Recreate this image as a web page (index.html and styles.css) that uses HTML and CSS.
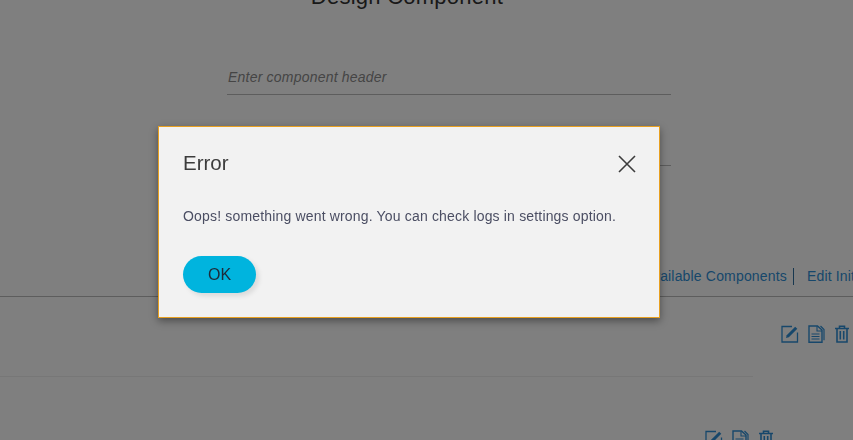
FILE: index.html
```html
<!DOCTYPE html>
<html lang="en">
<head>
<meta charset="utf-8">
<title>Design Component</title>
<link rel="stylesheet" href="styles.css">
</head>
<body>
<main class="page">
  <h1 class="title">Design Component</h1>
  <div class="form">
    <div class="field"><span class="placeholder">Enter component header</span></div>
    <div class="field field-empty"></div>
  </div>
  <nav class="links">
    <a class="link link-first">Available Components</a>
    <a class="link">Edit Initial Data</a>
  </nav>
  <section class="row row-first">
    <div class="actions">
      <svg class="icon" viewBox="0 0 18 18"><use href="#i-edit"/></svg>
      <svg class="icon" viewBox="0 0 18 18"><use href="#i-copy"/></svg>
      <svg class="icon" viewBox="0 0 18 18"><use href="#i-trash"/></svg>
    </div>
  </section>
  <section class="row row-second">
    <div class="actions">
      <svg class="icon" viewBox="0 0 18 18"><use href="#i-edit"/></svg>
      <svg class="icon" viewBox="0 0 18 18"><use href="#i-copy"/></svg>
      <svg class="icon" viewBox="0 0 18 18"><use href="#i-trash"/></svg>
    </div>
  </section>
</main>

<svg class="defs" aria-hidden="true">
  <symbol id="i-edit" viewBox="0 0 18 18">
    <path d="M11 1.500H1v15.500h15.500V7.500" fill="none" stroke="currentColor" stroke-width="1.300"/>
    <path d="M5 13l.7-2.800L14.200 1.700l2.100 2.100-8.500 8.500z" fill="currentColor"/>
  </symbol>
  <symbol id="i-copy" viewBox="0 0 18 18">
    <path d="M13.500 1L17 4.500v10.800" fill="none" stroke="currentColor" stroke-width="1.200"/>
    <path d="M2 1h8.500L15 5v12.300H2z" fill="none" stroke="currentColor" stroke-width="1.400"/>
    <path d="M10 1.200v4.800h5M4.500 9h8M4.500 11.500h8M4.500 14h8" fill="none" stroke="currentColor" stroke-width="1.100"/>
  </symbol>
  <symbol id="i-trash" viewBox="0 0 18 18">
    <path d="M2 3.500h14M6.500 3.500V1.200h5v2.300M4 3.500V17h10V3.500M7.300 6v8.500M10.700 6v8.500" fill="none" stroke="currentColor" stroke-width="1.600"/>
  </symbol>
</svg>

<div class="overlay"></div>

<div class="dialog" role="dialog" aria-labelledby="dialog-title">
  <header class="dialog-head">
    <h2 class="dialog-title" id="dialog-title">Error</h2>
    <svg class="close" viewBox="0 0 18 18" aria-label="Close"><path d="M1 1l16 16M17 1L1 17" fill="none" stroke="currentColor" stroke-width="1.600"/></svg>
  </header>
  <p class="dialog-text">Oops! something went wrong. You can check logs in settings option.</p>
  <button class="ok" type="button">OK</button>
</div>
</body>
</html>
```

FILE: styles.css
```css
* { box-sizing: border-box; }

html, body {
  margin: 0;
  height: 440px;
  overflow: hidden;
  background: #fff;
  font-family: "Liberation Sans", Arial, sans-serif;
}

.page {
  display: flex;
  flex-direction: column;
  height: 440px;
  overflow: hidden;
}

.page > * { flex: none; }

.title {
  margin: -19px 0 0;
  height: 30px;
  padding-right: 39px;
  font-size: 22px;
  line-height: 31px;
  font-weight: 400;
  letter-spacing: .25px;
  text-align: center;
  color: #333;
}

.form {
  display: flex;
  flex-direction: column;
  align-self: flex-start;
  width: 444px;
  margin: 53px 0 0 227px;
}

.field {
  height: 31px;
  padding-left: 1px;
  border-bottom: 1px solid #bbb;
  font-size: 14px;
  line-height: 26px;
}

.field-empty { height: 71px; }

.placeholder {
  font-style: italic;
  letter-spacing: .21px;
  color: #8a8a8a;
}

.links {
  display: flex;
  justify-content: flex-end;
  height: 34px;
  margin-top: 96px;
  margin-right: -64px;
  font-size: 14px;
  line-height: 28px;
  letter-spacing: .17px;
  color: #2f8fd6;
}

.link { padding: 0 13px; white-space: nowrap; }

.link-first {
  height: 17px;
  line-height: 17px;
  margin-top: 6px;
  padding-right: 6px;
  border-right: 1px solid #2f6f9f;
}

.row { display: flex; justify-content: flex-end; }

.row-first {
  height: 80px;
  border-top: 1px solid #bbb;
  padding-top: 28px;
}

.row-second {
  width: 753px;
  height: 64px;
  border-top: 1px solid #eee;
  padding-top: 53px;
}

.actions {
  display: flex;
  gap: 8px;
  color: #2f8fd6;
}

.row-first .actions { margin-right: 2px; }
.row-second .actions { margin-right: -22px; }

.icon { width: 18px; height: 18px; }

.defs { display: none; }

.overlay {
  position: fixed;
  inset: 0;
  background: rgba(0, 0, 0, .5);
}

.dialog {
  position: absolute;
  left: 158px;
  top: 126px;
  width: 502px;
  height: 192px;
  padding: 0 23px 0 24px;
  display: flex;
  flex-direction: column;
  align-items: flex-start;
  background: #f2f2f2;
  border: 1px solid #e8a020;
  box-shadow: 0 3px 8px rgba(0, 0, 0, .4);
}

.dialog-head {
  display: flex;
  justify-content: space-between;
  align-items: center;
  width: 100%;
  height: 72px;
}

.dialog-title {
  margin: 0;
  font-size: 20.5px;
  line-height: 72px;
  font-weight: 400;
  color: #3c3c3c;
}

.close {
  width: 18px;
  height: 18px;
  margin-top: 2px;
  color: #3c3c3c;
}

.dialog-text {
  margin: 0;
  font-size: 14px;
  line-height: 34px;
  letter-spacing: .17px;
  color: #4b4e63;
}

.ok {
  width: 73px;
  height: 37px;
  margin-top: 23px;
  padding: 0;
  border: 0;
  border-radius: 19px;
  background: #00b4de;
  box-shadow: 3px 3px 5px rgba(0, 0, 0, .1);
  font-family: inherit;
  font-size: 16px;
  color: #1d2b3a;
}
```
